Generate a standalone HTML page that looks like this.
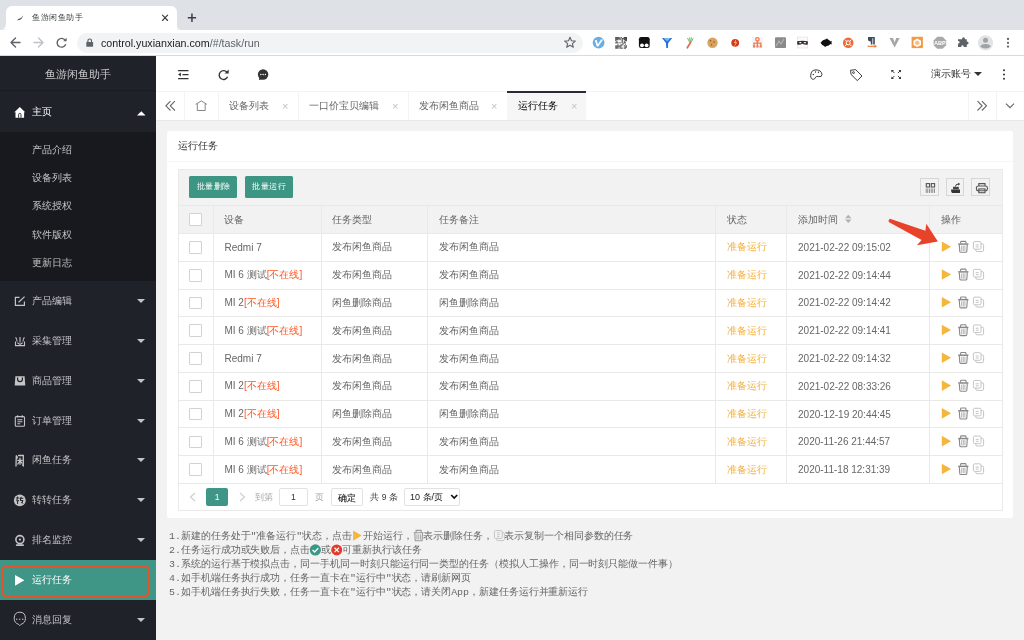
<!DOCTYPE html>
<html><head><meta charset="utf-8">
<style>
*{margin:0;padding:0;box-sizing:border-box}
html,body{width:1024px;height:640px;overflow:hidden;will-change:transform;background:#f2f2f2;font-family:"Liberation Sans",sans-serif;color:#666;position:relative}
.a{position:absolute}
/* browser chrome */
#strip{left:0;top:0;width:1024px;height:30px;background:#dee1e6}
#btab{left:6px;top:6px;width:170.5px;height:25px;background:#fff;border-radius:6px 6px 0 0}
#toolbar{left:0;top:30px;width:1024px;height:26px;background:#fff;border-bottom:1px solid #d9dadc}
#url{left:77px;top:33px;width:506px;height:20px;background:#f1f3f4;border-radius:10px}
.urltext{font-size:10.7px;color:#202124;white-space:nowrap}
/* sidebar */
#side{left:0;top:56px;width:156px;height:584px;background:#20222a}
#logo{left:0;top:57px;width:156px;height:34px;border-bottom:1px solid #1b1c22;color:#c8c9cb;font-size:11.4px;text-align:center;line-height:35px}
#submenu{left:0;top:131.5px;width:156px;height:149px;background:#18191e}
.mi{position:absolute;left:0;width:156px;height:40px;line-height:40px;font-size:10px;color:#c3c4c6}
.mi .t{position:absolute;left:32px;top:0}
.sub{position:absolute;left:32px;font-size:10px;color:#c3c4c6;line-height:14px}
.caret{position:absolute;left:137px;top:18px;width:0;height:0;border-left:4.3px solid transparent;border-right:4.3px solid transparent;border-top:4.3px solid #c3c4c6}
.caretup{position:absolute;left:137px;top:17px;width:0;height:0;border-left:4.3px solid transparent;border-right:4.3px solid transparent;border-bottom:4.3px solid #fff}
/* header */
#header{left:156px;top:56px;width:868px;height:36px;background:#fff;border-bottom:1px solid #f3f3f3}
#tabs{left:156px;top:92px;width:868px;height:29px;background:#fff;border-bottom:1px solid #e8e8e8}
.tsep{position:absolute;top:91px;width:1px;height:28.5px;background:#f3f3f3}
.ttext{position:absolute;top:99px;font-size:10px;line-height:14px;color:#666;white-space:nowrap}
.tx{position:absolute;top:99px;font-size:11px;line-height:14px;color:#c2c2c2}
/* card */
#card{left:166.5px;top:131px;width:846px;height:387px;background:#fff;border-radius:2px}
#cardhead{left:166.5px;top:131px;width:846px;height:31px;border-bottom:1px solid #f6f6f6;font-size:10px;color:#333;line-height:29px;padding-left:11.5px}
#tool{left:178px;top:168.5px;width:825px;height:37px;background:#f2f2f2;border:1px solid #ebebeb;border-bottom:none}
.btn{position:absolute;top:176px;height:21.5px;width:48px;background:#3d9684;color:#fff;font-size:8.4px;letter-spacing:0.5px;text-indent:0.5px;line-height:21.5px;text-align:center;border-radius:1.5px}
.tbic{position:absolute;top:178.4px;width:18.3px;height:18px;border:1px solid #d6d6d6;background:#f2f2f2}
table{position:absolute;left:178px;top:205.3px;width:824.6px;border-collapse:collapse;table-layout:fixed}
td,th{border:1px solid #e9e9e9;height:27.78px;font-size:10px;font-weight:normal;text-align:left;padding:0 0 0 10.7px;color:#666;white-space:nowrap;overflow:hidden}
th{background:#f2f2f2}
.cb{display:inline-block;margin-left:-0.8px;width:12.8px;height:12.6px;border:1px solid #d2d2d2;background:#fff;border-radius:1px;vertical-align:middle}
.off{color:#FF5722}
.st{color:#f4b03e}
#page{left:178px;top:482.2px;width:825px;height:28.6px;border:1px solid #e9e9e9;border-top:none}
#notes{left:169.1px;top:529.8px;font-family:"Liberation Mono",monospace;font-size:9.96px;letter-spacing:-0.06px;line-height:14.07px;color:#666;white-space:pre}
</style></head><body>
<div id="strip" class="a"></div>
<div id="btab" class="a"></div>
<div class="a" style="left:32px;top:12px;font-size:8.4px;letter-spacing:0.55px;color:#3c4043;line-height:11px">鱼游闲鱼助手</div>
<div id="toolbar" class="a"></div>
<div id="url" class="a"></div>
<div class="a urltext" style="left:101px;top:36px;line-height:14px">control.yuxianxian.com<span style="color:#5f6368">/#/task/run</span></div>

<div id="side" class="a"></div>
<div id="logo" class="a">鱼游闲鱼助手</div>
<div class="mi" style="top:91.5px;color:#fff"><span class="t">主页</span></div>
<div id="submenu" class="a"></div>
<div class="sub" style="top:143px">产品介绍</div>
<div class="sub" style="top:170.5px">设备列表</div>
<div class="sub" style="top:199px">系统授权</div>
<div class="sub" style="top:227.5px">软件版权</div>
<div class="sub" style="top:256px">更新日志</div>
<div class="mi" style="top:280.5px"><span class="t">产品编辑</span><span class="caret"></span></div>
<div class="mi" style="top:320.5px"><span class="t">采集管理</span><span class="caret"></span></div>
<div class="mi" style="top:360.5px"><span class="t">商品管理</span><span class="caret"></span></div>
<div class="mi" style="top:400.5px"><span class="t">订单管理</span><span class="caret"></span></div>
<div class="mi" style="top:440px"><span class="t">闲鱼任务</span><span class="caret"></span></div>
<div class="mi" style="top:480px"><span class="t">转转任务</span><span class="caret"></span></div>
<div class="mi" style="top:520px"><span class="t">排名监控</span><span class="caret"></span></div>
<div class="mi" style="top:560px;background:#3f9586;color:#fff"><span class="t">运行任务</span></div>
<div class="a" style="left:2px;top:564.5px;width:146.5px;height:32.5px;border:2.5px solid #e5532a;border-radius:4px"></div>
<div class="mi" style="top:600px"><span class="t">消息回复</span><span class="caret"></span></div>

<div id="header" class="a"></div>
<div class="a" style="left:930.5px;top:67px;font-size:10px;line-height:14px;color:#333">演示账号</div>
<div class="a" style="left:974px;top:72px;width:0;height:0;border-left:4px solid transparent;border-right:4px solid transparent;border-top:4.5px solid #333"></div>

<div id="tabs" class="a"></div>
<div class="tsep" style="left:184px"></div>
<div class="tsep" style="left:217.5px"></div>
<div class="tsep" style="left:297.5px"></div>
<div class="tsep" style="left:407.5px"></div>
<div class="a" style="left:507px;top:91px;width:79px;height:28.5px;background:#f6f6f6;border-top:2px solid #292b34"></div>
<div class="tsep" style="left:967.5px"></div>
<div class="tsep" style="left:996px"></div>
<div class="ttext" style="left:229px">设备列表</div><div class="tx" style="left:282px">×</div>
<div class="ttext" style="left:308.7px">一口价宝贝编辑</div><div class="tx" style="left:392px">×</div>
<div class="ttext" style="left:418.5px">发布闲鱼商品</div><div class="tx" style="left:491px">×</div>
<div class="ttext" style="left:518px;color:#000">运行任务</div><div class="tx" style="left:571px">×</div>

<div id="card" class="a"></div>
<div id="cardhead" class="a">运行任务</div>
<div id="tool" class="a"></div>
<div class="btn" style="left:189.3px">批量删除</div>
<div class="btn" style="left:244.8px">批量运行</div>
<div class="tbic" style="left:920.3px"></div>
<div class="tbic" style="left:945.8px"></div>
<div class="tbic" style="left:971.4px"></div>

<table>
<colgroup><col style="width:34.8px"><col style="width:107.9px"><col style="width:106.6px"><col style="width:287.9px"><col style="width:71.2px"><col style="width:143.0px"><col style="width:73.0px"></colgroup>
<tr><th><span class="cb"></span></th><th>设备</th><th>任务类型</th><th>任务备注</th><th>状态</th><th>添加时间</th><th>操作</th></tr>
<tr><td><span class="cb"></span></td><td>Redmi 7</td><td>发布闲鱼商品</td><td>发布闲鱼商品</td><td class="st">准备运行</td><td>2021-02-22 09:15:02</td><td></td></tr>
<tr><td><span class="cb"></span></td><td>MI 6 测试<span class="off">[不在线]</span></td><td>发布闲鱼商品</td><td>发布闲鱼商品</td><td class="st">准备运行</td><td>2021-02-22 09:14:44</td><td></td></tr>
<tr><td><span class="cb"></span></td><td>MI 2<span class="off">[不在线]</span></td><td>闲鱼删除商品</td><td>闲鱼删除商品</td><td class="st">准备运行</td><td>2021-02-22 09:14:42</td><td></td></tr>
<tr><td><span class="cb"></span></td><td>MI 6 测试<span class="off">[不在线]</span></td><td>发布闲鱼商品</td><td>发布闲鱼商品</td><td class="st">准备运行</td><td>2021-02-22 09:14:41</td><td></td></tr>
<tr><td><span class="cb"></span></td><td>Redmi 7</td><td>发布闲鱼商品</td><td>发布闲鱼商品</td><td class="st">准备运行</td><td>2021-02-22 09:14:32</td><td></td></tr>
<tr><td><span class="cb"></span></td><td>MI 2<span class="off">[不在线]</span></td><td>发布闲鱼商品</td><td>发布闲鱼商品</td><td class="st">准备运行</td><td>2021-02-22 08:33:26</td><td></td></tr>
<tr><td><span class="cb"></span></td><td>MI 2<span class="off">[不在线]</span></td><td>闲鱼删除商品</td><td>闲鱼删除商品</td><td class="st">准备运行</td><td>2020-12-19 20:44:45</td><td></td></tr>
<tr><td><span class="cb"></span></td><td>MI 6 测试<span class="off">[不在线]</span></td><td>发布闲鱼商品</td><td>发布闲鱼商品</td><td class="st">准备运行</td><td>2020-11-26 21:44:57</td><td></td></tr>
<tr><td><span class="cb"></span></td><td>MI 6 测试<span class="off">[不在线]</span></td><td>发布闲鱼商品</td><td>发布闲鱼商品</td><td class="st">准备运行</td><td>2020-11-18 12:31:39</td><td></td></tr>
</table>
<div id="page" class="a"></div>


<div class="a" style="left:206px;top:487.8px;width:22.3px;height:18.2px;background:#3f9586;border-radius:2px;color:#fff;font-size:8.6px;line-height:19.5px;text-align:center">1</div>
<div class="a" style="left:254.7px;top:490px;font-size:8.5px;line-height:14px;color:#aaa">到第</div>
<div class="a" style="left:279.4px;top:488.2px;width:28.2px;height:17.6px;border:1px solid #e2e2e2;background:#fff;border-radius:2px;color:#333;font-size:8.6px;line-height:17.6px;text-align:center">1</div>
<div class="a" style="left:315px;top:490px;font-size:8.5px;line-height:14px;color:#aaa">页</div>
<div class="a" style="left:331px;top:488.2px;width:32.2px;height:17.6px;border:1px solid #e2e2e2;background:#fff;border-radius:2px;color:#222;font-size:8.5px;line-height:18px;text-align:center;-webkit-text-stroke:0.1px #222">确定</div>
<div class="a" style="left:370.3px;top:490px;font-size:8.5px;line-height:14px;color:#3a3a3a;word-spacing:0">共 9 条</div>
<div class="a" style="left:404.2px;top:488.2px;width:56.3px;height:17.6px;border:1px solid #e2e2e2;background:#fff;border-radius:2px"></div>
<div class="a" style="left:410px;top:490px;font-size:9px;line-height:14px;color:#222">10 条/页</div>
<svg class="a" style="left:450px;top:492px" width="10" height="10" viewBox="0 0 10 10"><path d="M1.2 3 L4.2 6 L7.2 3" fill="none" stroke="#111" stroke-width="1.7"/></svg>
<div id="notes" class="a">1.新建的任务处于"准备运行"状态，点击<span style="display:inline-block;position:relative;width:11px;height:0"><svg style="position:absolute;left:0;top:-10px" width="14" height="14" viewBox="351.8 528.8 14 14"><path d="M352.9 530.3 L361.5 535.4 L352.9 540.5Z" fill="#f4b63c"/></svg></span>开始运行，<span style="display:inline-block;position:relative;width:10.8px;height:0"><svg style="position:absolute;left:0;top:-10px" width="14" height="14" viewBox="412.5 528.8 14 14"><g fill="none" stroke="#9a9a9a" stroke-width="1.1"><path d="M413.2 532.6 H423 M415.6 532.4 V530.2 H420.6 V532.4"/><path d="M414.3 532.8 L414.7 540.6 H421.6 L422 532.8"/></g><g stroke="#9a9a9a" stroke-width="0.8"><path d="M416.4 534.2 V539.3 M418.2 534.2 V539.3 M420 534.2 V539.3"/></g></svg></span>表示删除任务，<span style="display:inline-block;position:relative;width:11.3px;height:0"><svg style="position:absolute;left:0;top:-10px" width="14" height="14" viewBox="492.89 528.8 14 14"><g fill="none" stroke="#c6c6c6" stroke-width="1"><rect x="496.3" y="532.4" width="8" height="8" rx="1.3"/><rect x="494.3" y="530.3" width="7.8" height="8" rx="1.3" fill="#f2f2f2"/><path d="M497 532.6 H499.6 M497 534.5 H499.6 M497 536.4 H499.6"/></g></svg></span>表示复制一个相同参数的任务
2.任务运行成功或失败后，点击<span style="display:inline-block;position:relative;width:11px;height:0"><svg style="position:absolute;left:0;top:-10px" width="14" height="14" viewBox="310.14 542.86 14 14"><circle cx="315.5" cy="549.8" r="5.6" fill="#3a9886"/><path d="M312.7 549.8 L314.8 551.9 L318.4 548" fill="none" stroke="#fff" stroke-width="1.3"/></svg></span>或<span style="display:inline-block;position:relative;width:11px;height:0"><svg style="position:absolute;left:0;top:-10px" width="14" height="14" viewBox="331.09 542.86 14 14"><circle cx="336.8" cy="549.8" r="5.5" fill="#e53a2b"/><path d="M334.6 547.6 L339 552 M339 547.6 L334.6 552" fill="none" stroke="#fff" stroke-width="1.2"/></svg></span>可重新执行该任务
3.系统的运行基于模拟点击，同一手机同一时刻只能运行同一类型的任务（模拟人工操作，同一时刻只能做一件事）
4.如手机端任务执行成功，任务一直卡在"运行中"状态，请刷新网页
5.如手机端任务执行失败，任务一直卡在"运行中"状态，请关闭App，新建任务运行并重新运行</div>

<svg class="a" style="left:0;top:0" width="1024" height="640" viewBox="0 0 1024 640">
<!-- ===== browser chrome ===== -->
<path d="M0 29.5 Q6 29.5 6 23.5 L6 29.5Z" fill="#fff"/><path d="M176 29.5 Q182 29.5 182 29.5 L176 29.5 L176 23.5 Q176 29.5 182 29.5Z" fill="#fff"/>
<path d="M17 20.3 Q18.2 18.8 20.2 18.3 Q21.8 17.6 23.2 15.2 Q22.6 17.6 21.3 19 Q19.3 20.6 17 20.3Z" fill="#555"/>
<g stroke="#3c4043" stroke-width="1.15" stroke-linecap="round"><path d="M162.5 15.1 L167.6 20.5 M167.6 15.1 L162.5 20.5"/></g>
<g stroke="#3c4043" stroke-width="1.5"><path d="M187.8 17.7 H196.1 M191.95 13.5 V21.9"/></g>
<g fill="none" stroke="#5f6368" stroke-width="1.4" stroke-linecap="round" stroke-linejoin="round"><path d="M11 42.5 H20 M15.5 38 L11 42.5 L15.5 47"/></g>
<g fill="none" stroke="#bdc1c6" stroke-width="1.4" stroke-linecap="round" stroke-linejoin="round"><path d="M34 42.5 H43 M38.5 38 L43 42.5 L38.5 47"/></g>
<g fill="none" stroke="#5f6368" stroke-width="1.4"><path d="M65.2 40.3 A4.4 4.4 0 1 0 65.7 44.2"/></g>
<path d="M63.2 41.2 L66.6 41.2 L66.6 37.8Z" fill="#5f6368"/>
<rect x="86.3" y="42" width="6.8" height="4.7" rx="0.6" fill="#5f6368"/>
<path d="M87.9 42.2 V40.8 A1.8 1.8 0 0 1 91.5 40.8 V42.2" fill="none" stroke="#5f6368" stroke-width="1.2"/>
<path d="M570 37.2 L571.5 40.8 L575.3 41.1 L572.4 43.6 L573.3 47.3 L570 45.3 L566.7 47.3 L567.6 43.6 L564.7 41.1 L568.5 40.8Z" fill="none" stroke="#5f6368" stroke-width="1.1" stroke-linejoin="round"/>
<!-- extensions -->
<circle cx="598.6" cy="42.7" r="5.9" fill="#6aaee2"/>
<path d="M594.8 40.3 L596.6 40 L597.9 44.2 L601 39.4 L603.2 39.4 L598.2 46.6 L596.8 46.6Z" fill="#fff"/>
<rect x="615.3" y="37" width="11.6" height="11.6" fill="#fff"/><g fill="#333"><rect x="615.30" y="37.00" width="1.10" height="1.10"/><rect x="616.35" y="37.00" width="1.10" height="1.10"/><rect x="617.41" y="37.00" width="1.10" height="1.10"/><rect x="618.46" y="37.00" width="1.10" height="1.10"/><rect x="620.57" y="37.00" width="1.10" height="1.10"/><rect x="623.74" y="37.00" width="1.10" height="1.10"/><rect x="624.79" y="37.00" width="1.10" height="1.10"/><rect x="625.85" y="37.00" width="1.10" height="1.10"/><rect x="615.30" y="38.05" width="1.10" height="1.10"/><rect x="616.35" y="38.05" width="1.10" height="1.10"/><rect x="617.41" y="38.05" width="1.10" height="1.10"/><rect x="618.46" y="38.05" width="1.10" height="1.10"/><rect x="619.52" y="38.05" width="1.10" height="1.10"/><rect x="621.63" y="38.05" width="1.10" height="1.10"/><rect x="622.68" y="38.05" width="1.10" height="1.10"/><rect x="623.74" y="38.05" width="1.10" height="1.10"/><rect x="624.79" y="38.05" width="1.10" height="1.10"/><rect x="625.85" y="38.05" width="1.10" height="1.10"/><rect x="615.30" y="39.11" width="1.10" height="1.10"/><rect x="616.35" y="39.11" width="1.10" height="1.10"/><rect x="617.41" y="39.11" width="1.10" height="1.10"/><rect x="619.52" y="39.11" width="1.10" height="1.10"/><rect x="621.63" y="39.11" width="1.10" height="1.10"/><rect x="623.74" y="39.11" width="1.10" height="1.10"/><rect x="624.79" y="39.11" width="1.10" height="1.10"/><rect x="625.85" y="39.11" width="1.10" height="1.10"/><rect x="615.30" y="40.16" width="1.10" height="1.10"/><rect x="621.63" y="40.16" width="1.10" height="1.10"/><rect x="624.79" y="40.16" width="1.10" height="1.10"/><rect x="625.85" y="40.16" width="1.10" height="1.10"/><rect x="616.35" y="41.22" width="1.10" height="1.10"/><rect x="621.63" y="41.22" width="1.10" height="1.10"/><rect x="623.74" y="41.22" width="1.10" height="1.10"/><rect x="615.30" y="42.27" width="1.10" height="1.10"/><rect x="616.35" y="42.27" width="1.10" height="1.10"/><rect x="617.41" y="42.27" width="1.10" height="1.10"/><rect x="619.52" y="42.27" width="1.10" height="1.10"/><rect x="621.63" y="42.27" width="1.10" height="1.10"/><rect x="623.74" y="42.27" width="1.10" height="1.10"/><rect x="624.79" y="42.27" width="1.10" height="1.10"/><rect x="622.68" y="43.33" width="1.10" height="1.10"/><rect x="617.41" y="44.38" width="1.10" height="1.10"/><rect x="620.57" y="44.38" width="1.10" height="1.10"/><rect x="621.63" y="44.38" width="1.10" height="1.10"/><rect x="624.79" y="44.38" width="1.10" height="1.10"/><rect x="615.30" y="45.44" width="1.10" height="1.10"/><rect x="616.35" y="45.44" width="1.10" height="1.10"/><rect x="617.41" y="45.44" width="1.10" height="1.10"/><rect x="618.46" y="45.44" width="1.10" height="1.10"/><rect x="619.52" y="45.44" width="1.10" height="1.10"/><rect x="620.57" y="45.44" width="1.10" height="1.10"/><rect x="623.74" y="45.44" width="1.10" height="1.10"/><rect x="625.85" y="45.44" width="1.10" height="1.10"/><rect x="615.30" y="46.49" width="1.10" height="1.10"/><rect x="616.35" y="46.49" width="1.10" height="1.10"/><rect x="617.41" y="46.49" width="1.10" height="1.10"/><rect x="619.52" y="46.49" width="1.10" height="1.10"/><rect x="624.79" y="46.49" width="1.10" height="1.10"/><rect x="625.85" y="46.49" width="1.10" height="1.10"/><rect x="615.30" y="47.55" width="1.10" height="1.10"/><rect x="616.35" y="47.55" width="1.10" height="1.10"/><rect x="617.41" y="47.55" width="1.10" height="1.10"/><rect x="619.52" y="47.55" width="1.10" height="1.10"/><rect x="620.57" y="47.55" width="1.10" height="1.10"/><rect x="621.63" y="47.55" width="1.10" height="1.10"/><rect x="623.74" y="47.55" width="1.10" height="1.10"/><rect x="624.79" y="47.55" width="1.10" height="1.10"/></g>
<rect x="638.9" y="37" width="10.8" height="11" rx="2.2" fill="#111"/>
<circle cx="642" cy="45.3" r="1.9" fill="#fff"/><circle cx="646.6" cy="45.3" r="1.9" fill="#fff"/>
<path d="M662 38 L672.2 38 L668.2 43 L667.9 48 L666.3 48 L666 43Z" fill="#1c6fd6"/>
<path d="M663.6 38 L670.6 38 L667.1 41.6Z" fill="#7fb6f2"/>
<path d="M689.8 42.5 L687.5 38 M690.2 42.3 L689.6 37.3 M690.6 42.3 L691.5 37.4 M691 42.5 L693.2 38.2" fill="none" stroke="#6cbf60" stroke-width="1"/>
<path d="M687.3 47.8 L690.4 42.6" stroke="#e86a55" stroke-width="1.8" stroke-linecap="round"/>
<circle cx="712.5" cy="42.8" r="5.2" fill="#d9a25e"/>
<g fill="#8a5a2a"><circle cx="710.5" cy="40.7" r="0.8"/><circle cx="714" cy="42" r="0.8"/><circle cx="711.5" cy="44.8" r="0.7"/></g>
<circle cx="735.2" cy="42.8" r="3.9" fill="#d8352a"/>
<path d="M736.5 38.5 L733.8 43 L735.6 43 L733.5 47.5 L737.3 42.3 L735.5 42.3Z" fill="#f5c842"/>
<rect x="752" y="37" width="11" height="11" fill="#f4f4f4"/>
<g fill="none" stroke="#f07a55" stroke-width="1.3"><circle cx="757.4" cy="39.3" r="1.7"/><path d="M757.4 41 V43.2 M754 46 V43.2 H760.8 V46 M757.4 43.2 V46"/></g>
<g fill="#f07a55"><rect x="753" y="45.5" width="2.2" height="2" /><rect x="756.3" y="45.5" width="2.2" height="2"/><rect x="759.6" y="45.5" width="2.2" height="2"/></g>
<rect x="775" y="37.3" width="11" height="10.8" rx="1" fill="#8a8a8a"/>
<path d="M776 46 L779 41 L781 44 L784 39" fill="none" stroke="#b5b5b5" stroke-width="1.2"/>
<rect x="797.5" y="37" width="10" height="11" fill="#fafafa" stroke="#ddd" stroke-width="0.6"/>
<path d="M797.2 41.3 Q802.5 40.3 807.8 41.3 L807.8 44.5 Q805 45 802.5 43.8 Q800 45 797.2 44.5Z" fill="#3a2b2b"/>
<ellipse cx="800.3" cy="42.7" rx="1.2" ry="0.6" fill="#fff"/><ellipse cx="804.9" cy="42.7" rx="1.2" ry="0.6" fill="#fff"/>
<path d="M820.5 42.7 Q823 39 826 39.2 L827 38.3 L828 39.5 Q830 40.5 830.5 41.5 L831.8 40.8 L831.5 42.8 L831.8 44.6 L830.5 44 Q829 46 826 46.3 L825 47.3 L824.5 46.2 Q822 45.5 820.5 42.7Z" fill="#111"/>
<circle cx="848.2" cy="42.8" r="5.3" fill="#ec6d35"/>
<circle cx="848.2" cy="42.8" r="2" fill="none" stroke="#fff" stroke-width="1"/>
<path d="M845 39.6 L846.8 41.4 M851.4 39.6 L849.6 41.4 M845 46 L846.8 44.2 M851.4 46 L849.6 44.2" stroke="#fff" stroke-width="1"/>
<path d="M868 37 L874.8 37 L874.8 44.5 L873.2 44.5 L873.2 38.3 L872.4 38.3 L872.4 44.5 L870.8 44.5 L870.8 41.5 Q868 41.5 868 39.3Z" fill="#3f4b57"/>
<path d="M867.5 46.3 H875.5" stroke="#ef7c3a" stroke-width="1.2"/><path d="M874.5 44.6 L877 46.3 L874.5 48Z" fill="#ef7c3a"/>
<path d="M889.5 38 L893 38 L894.6 42.5 L896.2 38 L899.7 38 L894.6 47.5Z" fill="#a6a6a6"/>
<rect x="911.6" y="36.8" width="11.3" height="11.3" fill="#f39a45"/>
<path d="M917.2 38.6 L921 40.7 L921 44.9 L917.2 47 L913.5 44.9 L913.5 40.7Z" fill="#fff"/>
<path d="M917.2 40.5 L919.5 41.8 L919.5 43.9 L917.2 45.2 L915 43.9 L915 41.8Z" fill="#f7c08a"/>
<path d="M937.2 36.8 L942.6 36.8 L946.2 40.4 L946.2 45.2 L942.6 48.8 L937.2 48.8 L933.6 45.2 L933.6 40.4Z" fill="#a9a9a9"/>
<text x="939.9" y="44.8" font-size="5.6" font-weight="bold" fill="#fff" text-anchor="middle" font-family="Liberation Sans">ABP</text>
<path d="M960.5 39.2 H962 Q962 37.3 963.5 37.3 Q965 37.3 965 39.2 H966.8 V41.5 Q968.6 41.5 968.6 43 Q968.6 44.5 966.8 44.5 V46.9 H963.8 Q963.8 45.3 962.5 45.3 Q961.2 45.3 961.2 46.9 H958 V43.6 Q959.6 43.6 959.6 42.3 Q959.6 41 958 41 V39.2Z" fill="#5f6368"/>
<circle cx="985.5" cy="42.8" r="7.6" fill="#e2e3e4"/>
<circle cx="985.5" cy="40.3" r="2.5" fill="#9fa2a6"/>
<path d="M980.2 46.8 Q980.8 43.9 985.5 43.9 Q990.2 43.9 990.8 46.8 Q988.5 48.6 985.5 48.6 Q982.5 48.6 980.2 46.8Z" fill="#9fa2a6"/>
<g fill="#5f6368"><circle cx="1008" cy="39" r="1.15"/><circle cx="1008" cy="42.8" r="1.15"/><circle cx="1008" cy="46.6" r="1.15"/></g>
</svg>

<svg class="a" style="left:0;top:0" width="1024" height="640" viewBox="0 0 1024 640">
<!-- ===== sidebar icons ===== -->
<path d="M19.8 106.9 L25.2 112.3 L24.1 112.3 L24.1 117.7 L15.5 117.7 L15.5 112.3 L14.4 112.3Z" fill="#fff"/>
<path d="M18.6 117.7 V114.6 A1.2 1.2 0 0 1 21 114.6 V117.7" fill="none" stroke="#20222a" stroke-width="0.9"/>
<path d="M137 115.5 L141.3 111.2 L145.6 115.5Z" fill="#fff"/>
<g fill="none" stroke="#c3c4c6" stroke-width="1.2">
<path d="M19.5 297.3 H15.4 V305.4 H24.4 V301.5"/><path d="M18.6 302.2 L24.6 296.6"/>
</g>
<g fill="none" stroke="#c3c4c6" stroke-width="1.1">
<path d="M15.5 341.5 V345.6 H24.5 V341.5"/><path d="M15.6 337.3 Q17.2 339.5 17 341.6 M24.4 337.3 Q22.8 339.5 23 341.6 M20 337 V342.5"/><path d="M17.3 342.7 L20 344.4 L22.7 342.7"/>
</g>
<path d="M15.4 376.3 H24.6 L25.3 385.5 H14.7Z" fill="#c3c4c6"/>
<path d="M17.6 377.5 V379.2 A2.4 2.4 0 0 0 22.4 379.2 V377.5" fill="none" stroke="#20222a" stroke-width="1.2"/>
<g fill="none" stroke="#c3c4c6" stroke-width="1.1">
<rect x="15.3" y="416.6" width="9.2" height="9.6" rx="1"/><path d="M17.6 415.3 V417.6 M22.2 415.3 V417.6 M17.4 419.8 H22.4 M17.4 421.8 H22.4 M17.4 423.8 H20.2"/>
</g>
<g fill="none" stroke="#c3c4c6" stroke-width="1.3" stroke-linecap="round">
<path d="M16.3 455.8 L16 466 M16.3 455.8 Q17.5 456.6 17.3 458"/><path d="M18.6 455.5 H23.3 V465.6 L22.5 465"/><path d="M17.8 460.3 H22.2 M20 458.2 V464.3 M20 460.8 L17.8 464 M20 460.8 L22 463.2"/>
</g>
<circle cx="19.8" cy="500.4" r="5.9" fill="#c3c4c6"/>
<g fill="none" stroke="#20222a" stroke-width="1"><path d="M16.3 498 H19 M17.6 496.6 L16.8 501 L19 500.6 M17.6 501 V504 M19.5 498.3 H23.3 M21.2 496.8 L20.3 500.5 H23 L21.5 503.2 M21.6 502 L23 503.6"/></g>
<circle cx="19.9" cy="539.6" r="4" fill="none" stroke="#c3c4c6" stroke-width="1.6"/>
<circle cx="19.9" cy="539.6" r="1.1" fill="#c3c4c6"/>
<rect x="15.8" y="544.2" width="8.2" height="1.8" rx="0.9" fill="#c3c4c6"/>
<path d="M15 574.9 L24.4 580.35 L15 585.8Z" fill="#fff"/>
<g fill="none" stroke="#c3c4c6" stroke-width="1"><path d="M18.6 624.3 Q14.2 623 14.2 618.3 Q14.2 612.2 19.8 612.2 Q25.4 612.2 25.4 618.3 Q25.4 623 21 624.3 L19.8 625.6Z"/></g>
<g fill="#c3c4c6"><circle cx="16.8" cy="619.3" r="0.7"/><circle cx="19.8" cy="619.3" r="0.7"/><circle cx="22.8" cy="619.3" r="0.7"/></g>
<!-- ===== header icons ===== -->
<g stroke="#333" stroke-width="1.25"><path d="M178.1 70.5 H188.5 M182.4 74.5 H188.5 M178.1 78.5 H188.5"/></g>
<path d="M178.1 74.5 L180.9 72.6 V76.4Z" fill="#333"/>
<path d="M227 72.3 A4.4 4.4 0 1 0 227.6 76.8" fill="none" stroke="#333" stroke-width="1.4"/>
<path d="M224.6 73.6 L228.7 73.6 L228.7 69.5Z" fill="#333"/>
<circle cx="263.1" cy="74.5" r="5.2" fill="#333"/>
<path d="M259.5 77 L258.9 80 L262.4 79.2Z" fill="#333"/>
<g fill="#fff"><circle cx="260.8" cy="74.6" r="0.75"/><circle cx="263.1" cy="74.6" r="0.75"/><circle cx="265.4" cy="74.6" r="0.75"/></g>
<g fill="none" stroke="#333" stroke-width="0.95">
<path d="M816 69.9 Q811 69.9 810.7 75.3 Q810.6 79.4 813.3 79.3 Q815 79.2 815.6 77.2 Q816.2 76 818.5 76.6 Q821.9 77.3 822 74.6 Q821.4 69.9 816 69.9Z"/>
</g>
<g fill="#333"><circle cx="813.3" cy="74.5" r="0.7"/><circle cx="815.5" cy="72" r="0.7"/><circle cx="818.5" cy="72.2" r="0.7"/></g>
<g fill="none" stroke="#333" stroke-width="0.95" stroke-linejoin="round"><path d="M850.6 70.2 L855.7 69.7 L862 76 L857.3 80.6 L851 74.4Z"/><circle cx="853.5" cy="72.6" r="0.9"/></g>
<g fill="none" stroke="#333" stroke-width="0.95"><path d="M891.8 70.4 L894.5 73.1 M900.6 70.4 L897.9 73.1 M891.8 78.6 L894.5 75.9 M900.6 78.6 L897.9 75.9"/></g>
<g fill="#333"><path d="M891.4 70 H894 L891.4 72.6Z M901 70 H898.4 L901 72.6Z M891.4 79 H894 L891.4 76.4Z M901 79 H898.4 L901 76.4Z"/></g>
<g fill="#333"><circle cx="1004" cy="70.3" r="1"/><circle cx="1004" cy="74.5" r="1"/><circle cx="1004" cy="78.7" r="1"/></g>
<!-- ===== tabs icons ===== -->
<g fill="none" stroke="#666" stroke-width="1.1" stroke-linejoin="miter"><path d="M170.5 101.2 L165.9 105.8 L170.5 110.5 M174.9 101.2 L170.3 105.8 L174.9 110.5"/></g>
<g fill="none" stroke="#777" stroke-width="0.9"><path d="M195.7 104.4 L201.3 100.9 L206.9 104.4 M197.3 103.6 V110.5 H205.2 V103.6"/></g>
<g fill="none" stroke="#666" stroke-width="1.1"><path d="M977.5 101.2 L982.1 105.8 L977.5 110.5 M981.9 101.2 L986.5 105.8 L981.9 110.5"/></g>
<g fill="none" stroke="#666" stroke-width="1.1"><path d="M1006 103.6 L1010 107.6 L1014 103.6"/></g>
<!-- ===== table toolbar icons ===== -->
<g fill="none" stroke="#555" stroke-width="1.1"><rect x="926.3" y="183.6" width="3.3" height="3.4"/><rect x="931.3" y="183.6" width="3.3" height="3.4"/></g>
<g fill="#777"><rect x="925.8" y="188.5" width="0.8" height="4.4"/><rect x="927.4" y="188.5" width="0.8" height="4.4"/><rect x="929" y="188.5" width="0.8" height="4.4"/><rect x="930.8" y="188.5" width="0.8" height="4.4"/><rect x="932.4" y="188.5" width="0.8" height="4.4"/><rect x="934" y="188.5" width="0.8" height="4.4"/></g>
<path d="M951 189.4 H960 V193 H952.2 Q951 192.2 951 189.4Z" fill="#333"/>
<path d="M953 189.4 V186.8 H958.8 V189.4" fill="#444"/>
<path d="M955.4 186.5 Q955.6 184 958.6 184" fill="none" stroke="#333" stroke-width="1"/><path d="M958.2 182.7 L960.2 184 L958.2 185.4Z" fill="#333"/>
<g fill="none" stroke="#555" stroke-width="1.1"><path d="M978.8 186 V183.6 H985 V186"/><rect x="976.4" y="186" width="11" height="4.8" rx="2"/><rect x="978.8" y="188.9" width="6.2" height="3.8"/></g>
<!-- sort icon -->
<path d="M845 218.3 L848.25 214.8 L851.5 218.3Z M845 219.6 L848.25 223 L851.5 219.6Z" fill="#b2b2b2"/>
<!-- pagination chevrons -->
<g fill="none" stroke="#cfcfcf" stroke-width="1.15"><path d="M195 493 L190.5 497 L195 501 M240 493 L244.5 497 L240 501"/></g>
<!-- red arrow -->
<path d="M889.2 222.3 Q887.6 220.6 889.9 218.8 L925.4 230.8 L926.3 223.8 L937.9 241.5 L916.9 245.2 L921.6 239.9 Z" fill="#e8432a"/>
</svg>

<svg class="a" style="left:0;top:0" width="1024" height="640" viewBox="0 0 1024 640">
<defs>
<g id="ops">
<path d="M941.8 241.4 L951.1 246.7 L941.8 252Z" fill="#f4b63c"/>
<path d="M960.6 243.6 V242.3 Q960.6 241.4 961.5 241.4 H965.1 Q966 241.4 966 242.3 V243.6" fill="none" stroke="#888" stroke-width="1.1"/>
<path d="M958.2 244.1 H968.4" stroke="#888" stroke-width="1.5"/>
<path d="M959.3 244.6 L959.8 251.4 Q959.9 252.3 960.8 252.3 H965.8 Q966.7 252.3 966.8 251.4 L967.3 244.6" fill="none" stroke="#888" stroke-width="1.1"/>
<g stroke="#999" stroke-width="0.75"><path d="M961.7 245.6 V251 M963.3 245.6 V251 M964.9 245.6 V251"/></g>
<g fill="none" stroke="#c4c4c4" stroke-width="1"><rect x="975.8" y="243.9" width="7.8" height="7.6" rx="1.3"/><rect x="973.4" y="241.6" width="7.6" height="7.6" rx="1.3" fill="#fff"/><path d="M975.7 244.9 H978.7 M975.7 246.9 H978.7"/></g>
</g>
</defs>
<use href="#ops" y="-0.01"/>
<use href="#ops" y="27.77"/>
<use href="#ops" y="55.55"/>
<use href="#ops" y="83.33"/>
<use href="#ops" y="111.11"/>
<use href="#ops" y="138.89"/>
<use href="#ops" y="166.67"/>
<use href="#ops" y="194.45"/>
<use href="#ops" y="222.23"/>
</svg>


</body></html>
